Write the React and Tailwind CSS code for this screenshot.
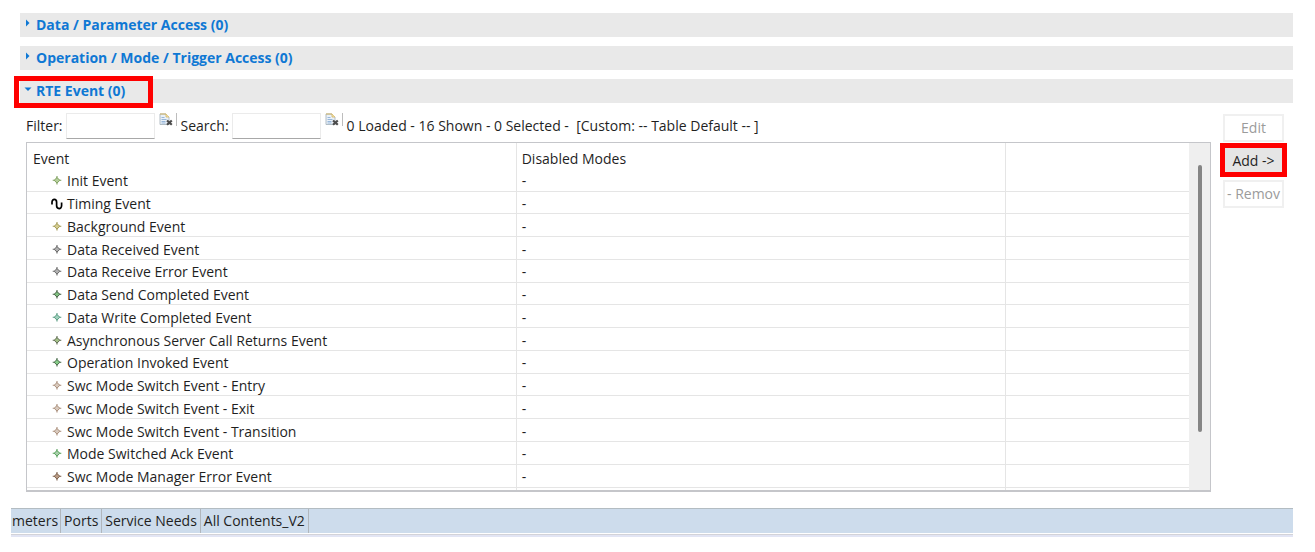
import React from 'react';

const events = [
  ['Init Event', '#7f9f5f', '#b5cf9a'],
  ['Timing Event', null, null],
  ['Background Event', '#a39a55', '#d3cc90'],
  ['Data Received Event', '#666666', '#b0b0b0'],
  ['Data Receive Error Event', '#6a6a6a', '#b0b0b0'],
  ['Data Send Completed Event', '#466046', '#7fc080'],
  ['Data Write Completed Event', '#5a9c82', '#9fd0bc'],
  ['Asynchronous Server Call Returns Event', '#5f6b52', '#a3c088'],
  ['Operation Invoked Event', '#4a6b4c', '#86cc88'],
  ['Swc Mode Switch Event - Entry', '#ab907c', '#d8c9bd'],
  ['Swc Mode Switch Event - Exit', '#ab907c', '#d8c9bd'],
  ['Swc Mode Switch Event - Transition', '#ab907c', '#d8c9bd'],
  ['Mode Switched Ack Event', '#55a05a', '#a8cfaa'],
  ['Swc Mode Manager Error Event', '#7d614c', '#b89a84'],
];

function EventIcon({ stroke, fill }) {
  if (!stroke) {
    return (
      <svg viewBox="0 0 12 12" className="h-3 w-3 shrink-0" aria-hidden="true">
        <path d="M1 6.5V4.2C1 .4 5.6.4 5.6 4.2v3.4c0 3.9 5 3.9 5 0V4.6" fill="none" stroke="#000" strokeWidth="1.7" />
      </svg>
    );
  }
  return (
    <svg viewBox="0 0 12 12" className="h-3 w-3 shrink-0" aria-hidden="true">
      <path d="M6 1v8.6M1.7 5.3h8.6" stroke={stroke} strokeWidth="1.1" />
      <path d="M6 2.5 8.8 5.3 6 8.1 3.2 5.3Z" fill={fill} stroke={stroke} strokeWidth="1" />
    </svg>
  );
}

function Section({ title, open, highlighted }) {
  return (
    <div className="relative h-6 bg-[#e9e9e9]">
      <button type="button" aria-expanded={!!open} className="flex h-full items-center text-[14px] leading-6 font-bold text-[#0f78d4]">
        <span className="flex w-4 justify-center pb-1">
          <svg viewBox="0 0 8 8" className="h-2 w-2" aria-hidden="true">
            <path d={open ? 'M0.5 2.5h7L4 6Z' : 'M2 0.5 5.5 4 2 7.5Z'} fill="#0f78d4" />
          </svg>
        </span>
        {title}
      </button>
      {highlighted && <span className="pointer-events-none absolute -top-[3px] -left-[6px] h-8 w-[139px] border-[5px] border-[#ff0000]" />}
    </div>
  );
}

function ClearButton({ label }) {
  return (
    <span className="flex items-start gap-[3px] self-start">
      <button type="button" aria-label={label}>
        <svg viewBox="0 0 14 14" className="h-[14px] w-[14px]" aria-hidden="true">
          <path d="M1 1h6l3 3v7.5H1Z" fill="#eaf1f8" stroke="#a9b5be" strokeWidth="0.9" />
          <path d="M1 1h6l3 3" fill="none" stroke="#d2b565" strokeWidth="1" />
          <path d="M7 1v3h3" fill="#f5e6b5" stroke="#d2b565" strokeWidth="0.8" />
          <path d="M2.5 4.5h3M2.5 6.5h5M2.5 8.5h4M2.5 10h4" stroke="#8fb0d6" strokeWidth="0.9" />
          <path d="M8 7.5 12.8 11.8M12.8 7.5 8 11.8" stroke="#4c4c4c" strokeWidth="2.2" />
        </svg>
      </button>
      <span className="h-[13px] w-px bg-[#bdbdbd]" />
    </span>
  );
}

function Field({ id, label }) {
  return (
    <span className="flex items-center">
      <label htmlFor={id} className="pr-[3px]">{label}</label>
      <input id={id} className="mr-1 h-[26px] w-[89px] border border-[#ebebeb] border-b-[#a8a8a8] bg-white px-1 outline-none" />
      <ClearButton label={`Clear ${id}`} />
    </span>
  );
}

export default function App() {
  const tabs = ['meters', 'Ports', 'Service Needs', 'All Contents_V2'];
  return (
    <div className="bg-white pt-[13px] pb-[14px] font-['Open_Sans','Noto_Sans',sans-serif] text-[14px] leading-[22px] text-[#1f1f1f]">
      <div className="mr-[22px] ml-5 flex flex-col gap-[9px]">
        <Section title="Data / Parameter Access (0)" />
        <Section title="Operation / Mode / Trigger Access (0)" />
        <Section title="RTE Event (0)" open highlighted />
      </div>

      <div className="mt-[10px] mr-[31px] ml-[26px] flex gap-3">
        <main className="min-w-0 flex-1">
          <div className="flex h-[26px] items-center gap-1">
            <Field id="filter" label="Filter:" />
            <Field id="search" label="Search:" />
            <span className="whitespace-pre">{'0 Loaded - 16 Shown - 0 Selected -  [Custom: -- Table Default -- ]'}</span>
          </div>
          <div className="mt-[3px] flex border border-[#c5c6ca] border-b-2">
            <table className="h-[347px] flex-1 table-fixed border-collapse text-left">
              <colgroup>
                <col className="w-[42.1%]" />
                <col className="w-[42.1%]" />
                <col />
              </colgroup>
              <thead>
                <tr>
                  <th className="h-[26px] border-r border-[#e5e5e5] px-[6px] pt-[5px] pb-0 font-normal leading-[20px]">Event</th>
                  <th className="border-r border-[#e5e5e5] px-[5px] pt-[5px] pb-0 font-normal leading-[20px]">Disabled Modes</th>
                  <th />
                </tr>
              </thead>
              <tbody>
                {events.map(([name, stroke, fill]) => (
                  <tr key={name} className="border-b border-[#e5e5e5]">
                    <td className="border-r border-[#e5e5e5] p-0 pt-[3px]">
                      <span className="flex items-center gap-1 pl-6 leading-[18px]">
                        <EventIcon stroke={stroke} fill={fill} />
                        {name}
                      </span>
                    </td>
                    <td className="border-r border-[#e5e5e5] px-[5px] pt-[3px] pb-0 leading-[18px]">-</td>
                    <td />
                  </tr>
                ))}
                <tr><td className="h-[3px] border-r border-[#e5e5e5] p-0" /><td className="border-r border-[#e5e5e5] p-0" /><td className="p-0" /></tr>
              </tbody>
            </table>
            <div className="flex w-[21px] justify-center bg-[#efefef] pt-[22px]">
              <div className="h-[267px] w-1 rounded-full bg-[#858585]" />
            </div>
          </div>
        </main>
        <aside className="flex w-[61px] flex-col gap-[5px] pt-px">
          <button type="button" disabled className="h-7 border-2 border-[#f0f0f0] text-[#9b9b9b]">Edit</button>
          <div className="relative">
            <button type="button" className="h-7 w-full bg-[#e5e5e5] whitespace-nowrap">Add -&gt;</button>
            <span className="pointer-events-none absolute -inset-x-[3px] -top-[4px] -bottom-[2px] border-[5px] border-[#ff0000]" />
          </div>
          <button type="button" disabled className="flex h-7 items-center overflow-hidden border-2 border-[#f0f0f0] pl-[2px] whitespace-nowrap text-[#9b9b9b]">- Remov</button>
        </aside>
      </div>

      <nav className="mt-4 mr-[22px] ml-[11px] flex h-[25px] border-t border-[#b3bcc2] bg-[#cddcec]">
        {tabs.map((tab, i) => (
          <button key={tab} type="button" className={i === 0 ? 'border-r border-[#b0b6bc] pr-[2px] pl-px' : 'border-r border-[#b0b6bc] px-[3px]'}>{tab}</button>
        ))}
      </nav>
      <div className="mt-px mr-[22px] ml-[11px] h-[3px] border-t border-[#d3d3d8] bg-[#e2e5f4]" />
    </div>
  );
}
